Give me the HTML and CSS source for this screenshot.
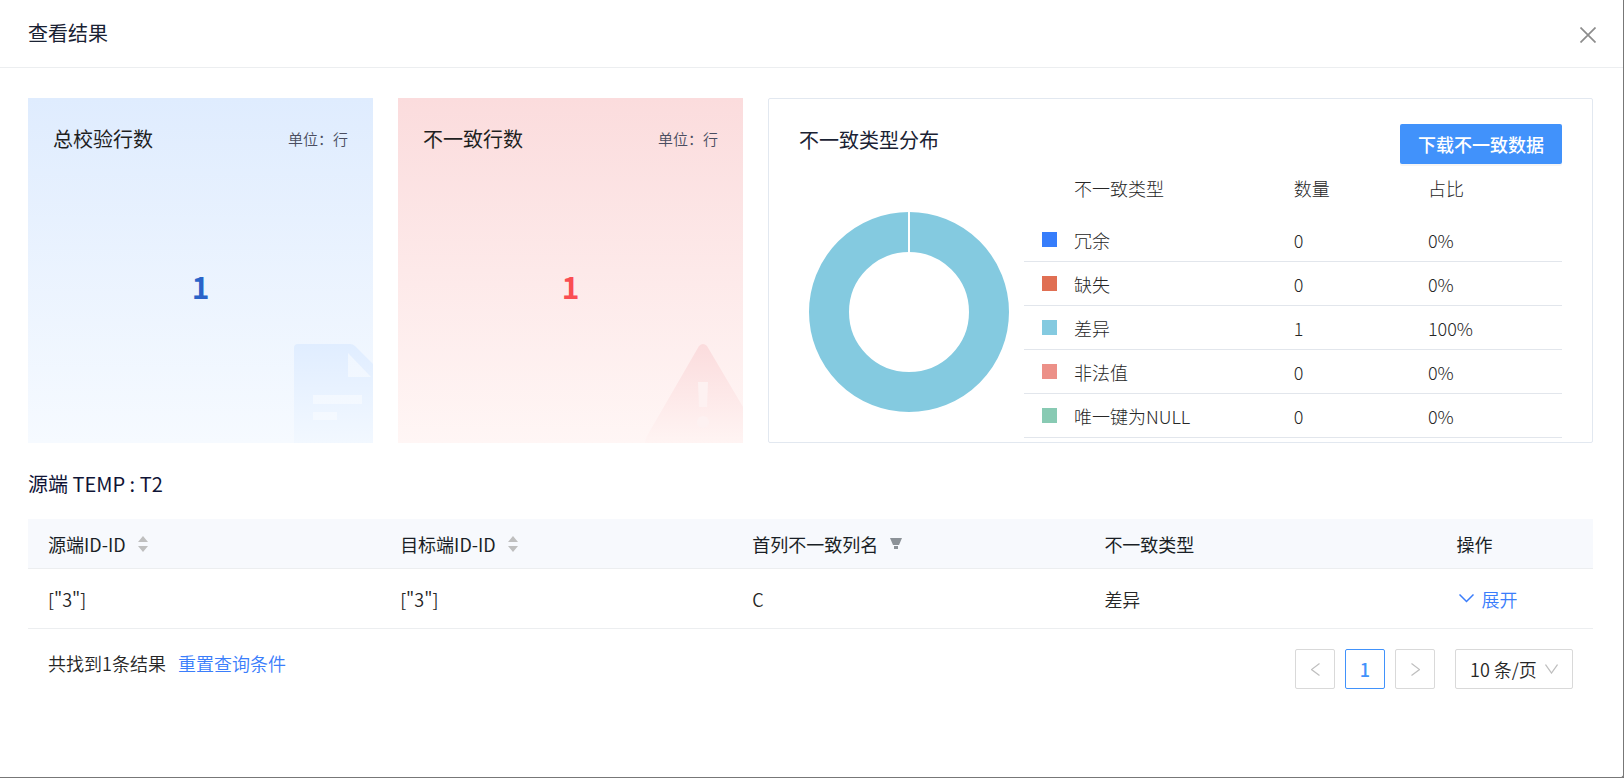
FILE: index.html
```
<!DOCTYPE html>
<html lang="zh-CN">
  <head>
    <meta charset="UTF-8" />
    <meta name="viewport" content="width=device-width, initial-scale=1.0" />
    <title>查看结果</title>
    <link rel="stylesheet" href="styles.css">
  </head>
  <body>
    <div class="drawer">
      <header class="drawer-header">
        <h1 class="title">查看结果</h1>
        <button class="close" aria-label="关闭">
          <svg width="16" height="16" viewBox="0 0 16 16" fill="none" stroke="currentColor" stroke-width="1.7">
            <path d="M0.5 0.5 15.5 15.5M15.5 0.5 0.5 15.5" />
          </svg>
        </button>
      </header>

      <main class="content">
        <div class="cards">
          <section class="card card-blue">
            <div class="card-head">
              <h2 class="title">总校验行数</h2>
              <span class="unit">单位：行</span>
            </div>
            <div class="card-value">1</div>
            <svg class="card-icon" width="79" height="99" viewBox="0 0 79 99">
              <defs>
                <linearGradient id="doc" x1="0" y1="0" x2="0" y2="1">
                  <stop offset="0" stop-color="#e0edff" />
                  <stop offset="1" stop-color="#f2f8ff" />
                </linearGradient>
              </defs>
              <path fill="url(#doc)" fill-rule="evenodd" d="M4 0H56Q59 0 61 2L79 20V99H0V4Q0 0 4 0ZM54 9V33H77ZM19 51V60H68V51ZM19 68V76H43V68Z" />
            </svg>
          </section>

          <section class="card card-red">
            <div class="card-head">
              <h2 class="title">不一致行数</h2>
              <span class="unit">单位：行</span>
            </div>
            <div class="card-value">1</div>
            <svg class="card-icon" width="98" height="99" viewBox="0 0 98 99">
              <defs>
                <linearGradient id="warn" x1="0" y1="0" x2="0" y2="1">
                  <stop offset="0" stop-color="#fbdcdd" />
                  <stop offset="1" stop-color="#fff4f3" />
                </linearGradient>
              </defs>
              <path fill="url(#warn)" d="M54 2Q58-2 62 2L98 63V99H0Q0 95 2 92Z" />
              <path fill="#fdf1f1" d="M53 38H63L62 63H54Z" />
              <circle fill="#fdf1f1" cx="58" cy="78" r="6" />
            </svg>
          </section>

          <section class="panel">
            <div class="panel-head">
              <h2 class="title">不一致类型分布</h2>
              <button class="btn-primary">下载不一致数据</button>
            </div>
            <div class="panel-body">
              <div class="chart">
                <svg width="200" height="200" viewBox="0 0 200 200" role="img" aria-label="差异 100%">
                  <circle cx="100" cy="100" r="80" fill="none" stroke="#84cae0" stroke-width="40" />
                  <path d="M100 0V41" stroke="#fff" stroke-width="2" />
                </svg>
              </div>
              <table class="legend">
                <colgroup>
                  <col class="col-swatch" />
                  <col class="col-type" />
                  <col class="col-count" />
                  <col class="col-ratio" />
                </colgroup>
                <thead>
                  <tr><th></th><th>不一致类型</th><th>数量</th><th>占比</th></tr>
                </thead>
                <tbody>
                  <tr><td><i class="swatch bg-blue"></i></td><td>冗余</td><td>0</td><td>0%</td></tr>
                  <tr><td><i class="swatch bg-orange"></i></td><td>缺失</td><td>0</td><td>0%</td></tr>
                  <tr><td><i class="swatch bg-cyan"></i></td><td>差异</td><td>1</td><td>100%</td></tr>
                  <tr><td><i class="swatch bg-pink"></i></td><td>非法值</td><td>0</td><td>0%</td></tr>
                  <tr><td><i class="swatch bg-green"></i></td><td>唯一键为NULL</td><td>0</td><td>0%</td></tr>
                </tbody>
              </table>
            </div>
          </section>
        </div>

        <h2 class="title source">源端 TEMP : T2</h2>

        <table class="result">
          <thead>
            <tr>
              <th>
                <span class="th-inner">源端ID-ID
                  <button class="icon-btn" aria-label="排序">
                    <svg width="10" height="16" viewBox="0 0 10 16" fill="#bfbfbf"><path d="M5 0 10 6H0ZM5 16 0 10H10Z" /></svg>
                  </button>
                </span>
              </th>
              <th>
                <span class="th-inner">目标端ID-ID
                  <button class="icon-btn" aria-label="排序">
                    <svg width="10" height="16" viewBox="0 0 10 16" fill="#bfbfbf"><path d="M5 0 10 6H0ZM5 16 0 10H10Z" /></svg>
                  </button>
                </span>
              </th>
              <th>
                <span class="th-inner">首列不一致列名
                  <button class="icon-btn" aria-label="筛选">
                    <svg width="12" height="12" viewBox="0 0 12 12" fill="#8c9298"><path d="M0 0H12L9 7H3ZM4 8H8V11H4Z" /></svg>
                  </button>
                </span>
              </th>
              <th>不一致类型</th>
              <th>操作</th>
            </tr>
          </thead>
          <tbody>
            <tr>
              <td>["3"]</td>
              <td>["3"]</td>
              <td>C</td>
              <td>差异</td>
              <td>
                <a class="link expand" href="#">
                  <svg width="15" height="9" viewBox="0 0 15 9" fill="none" stroke="currentColor" stroke-width="1.5"><path d="M0.5 0.5 7.5 7.5 14.5 0.5" /></svg>
                  展开
                </a>
              </td>
            </tr>
          </tbody>
        </table>

        <footer class="table-footer">
          <div class="summary">
            <span>共找到1条结果</span>
            <a class="link" href="#">重置查询条件</a>
          </div>
          <nav class="pagination" aria-label="分页">
            <button class="page" disabled aria-label="上一页">
              <svg width="9" height="13" viewBox="0 0 9 13" fill="none" stroke="currentColor" stroke-width="1.2"><path d="M8.5 0.5 0.5 6.5 8.5 12.5" /></svg>
            </button>
            <button class="page active">1</button>
            <button class="page" disabled aria-label="下一页">
              <svg width="9" height="13" viewBox="0 0 9 13" fill="none" stroke="currentColor" stroke-width="1.2"><path d="M0.5 0.5 8.5 6.5 0.5 12.5" /></svg>
            </button>
            <div class="page-size">
              <select aria-label="每页条数">
                <option>10 条/页</option>
                <option>20 条/页</option>
                <option>50 条/页</option>
              </select>
              <svg class="arrow" width="13" height="10" viewBox="0 0 13 10" fill="none" stroke="#bfbfbf" stroke-width="1.3"><path d="M0.5 0.5 6.5 9 12.5 0.5" /></svg>
            </div>
          </nav>
        </footer>
      </main>
    </div>
  </body>
</html>
```
FILE: styles.css
```
* {
  box-sizing: border-box;
}

body {
  margin: 0;
  background: #777;
  color: #262626;
  font-family: "Noto Sans CJK SC", sans-serif;
  font-size: 18px;
  font-weight: 350;
  line-height: 28px;
}

button,
select {
  font: inherit;
  color: inherit;
}

svg {
  display: block;
}

table {
  border-collapse: separate;
  border-spacing: 0;
  table-layout: fixed;
}

th,
td {
  padding: 0;
  text-align: left;
}

.drawer {
  min-height: 100vh;
  background: #fff;
  border: 1px solid #777;
  border-width: 0 1px 1px 0;
  border-bottom-right-radius: 3px;
}

.drawer-header {
  display: flex;
  align-items: center;
  justify-content: space-between;
  height: 68px;
  padding: 0 23px 2px 28px;
  border-bottom: 1px solid #eceef0;
}

.title {
  margin: 0;
  font-size: 20px;
  font-weight: 400;
  line-height: 32px;
  color: #1a2233;
}

.close {
  padding: 6px 4px 2px;
  border: 0;
  background: none;
  color: #8c8c8c;
}

.content {
  padding: 30px 30px 30px 28px;
}

/* top cards */
.cards {
  display: grid;
  grid-template-columns: 23fr 23fr 55fr;
  gap: 25px;
}

.card {
  position: relative;
  display: flex;
  flex-direction: column;
  min-height: 345px;
  padding: 25px;
}

.card .title {
  color: #1f1f1f;
}

.card-blue {
  background: linear-gradient(#dfecfe, #f6faff);
  color: #2a63c9;
}

.card-red {
  background: linear-gradient(#fbdcdd, #fff6f5);
  color: #fa4d52;
}

.card-head,
.panel-head {
  display: flex;
  justify-content: space-between;
}

.unit {
  color: #4a4d60;
  font-size: 15px;
  line-height: 32px;
}

.card-value {
  margin-top: 111px;
  font-size: 30px;
  font-weight: 700;
  line-height: 40px;
  text-align: center;
}

.card-icon {
  position: absolute;
  right: 0;
  bottom: 0;
}

.panel {
  padding: 25px 30px 4px;
  border: 1px solid #e2e8f0;
  border-radius: 2px;
}

.btn-primary {
  height: 40px;
  padding: 0 18px;
  border: 0;
  border-radius: 2px;
  background: #4192fb;
  box-shadow: 0 2px 0 rgba(0, 0, 0, 0.04);
  color: #fff;
  font-weight: 500;
}

.panel-body {
  display: flex;
  gap: 5px;
}

.chart {
  flex: 0 0 220px;
  padding: 48px 10px 0;
}

.legend {
  flex: 1;
  width: 100%;
  font-weight: 300;
}

.col-swatch {
  width: 50px;
}

.col-type {
  width: 41%;
}

.col-count,
.col-ratio {
  width: 25%;
}

.legend th {
  height: 54px;
  padding-bottom: 6px;
  font-weight: 300;
}

.legend td {
  height: 44px;
  border-bottom: 1px solid #e2e6ec;
}

.swatch {
  display: block;
  width: 15px;
  height: 15px;
  margin-left: 18px;
}

.bg-blue {
  background: #367dfb;
}

.bg-orange {
  background: #e06f53;
}

.bg-cyan {
  background: #84cae0;
}

.bg-pink {
  background: #ec9088;
}

.bg-green {
  background: #88cab3;
}

/* result table */
.source {
  margin: 25px 0 19px;
  color: #101436;
}

.result {
  width: 100%;
}

.result th {
  width: 22.5%;
  height: 50px;
  padding: 0 20px;
  background: #f7f9fd;
  border-bottom: 1px solid #eceef0;
  color: #1a1f26;
  font-weight: 400;
}

.result th:last-child {
  width: 10%;
}

.result td {
  height: 60px;
  padding: 0 20px;
  border-bottom: 1px solid #eceef0;
}

.th-inner {
  display: flex;
  align-items: center;
  gap: 12px;
}

.icon-btn {
  padding: 0;
  border: 0;
  background: none;
}

.link {
  color: #3a7dfb;
  text-decoration: none;
}

.expand {
  display: flex;
  align-items: center;
  gap: 8px;
  padding-left: 2px;
}

.table-footer {
  display: flex;
  justify-content: space-between;
  padding: 20px;
}

.summary {
  display: flex;
  gap: 12px;
}

.pagination {
  display: flex;
  gap: 10px;
}

.page {
  display: flex;
  align-items: center;
  justify-content: center;
  width: 40px;
  height: 40px;
  padding: 0;
  border: 1px solid #d9d9d9;
  border-radius: 2px;
  background: #fff;
  color: #bfbfbf;
}

.page.active {
  border-color: #4192fb;
  color: #4192fb;
  font-weight: 500;
}

.page-size {
  position: relative;
  margin-left: 10px;
}

.page-size select {
  appearance: none;
  width: 118px;
  height: 40px;
  padding: 0 14px;
  border: 1px solid #d9d9d9;
  border-radius: 2px;
  background: #fff;
}

.arrow {
  position: absolute;
  top: 15px;
  right: 15px;
  pointer-events: none;
}
```
